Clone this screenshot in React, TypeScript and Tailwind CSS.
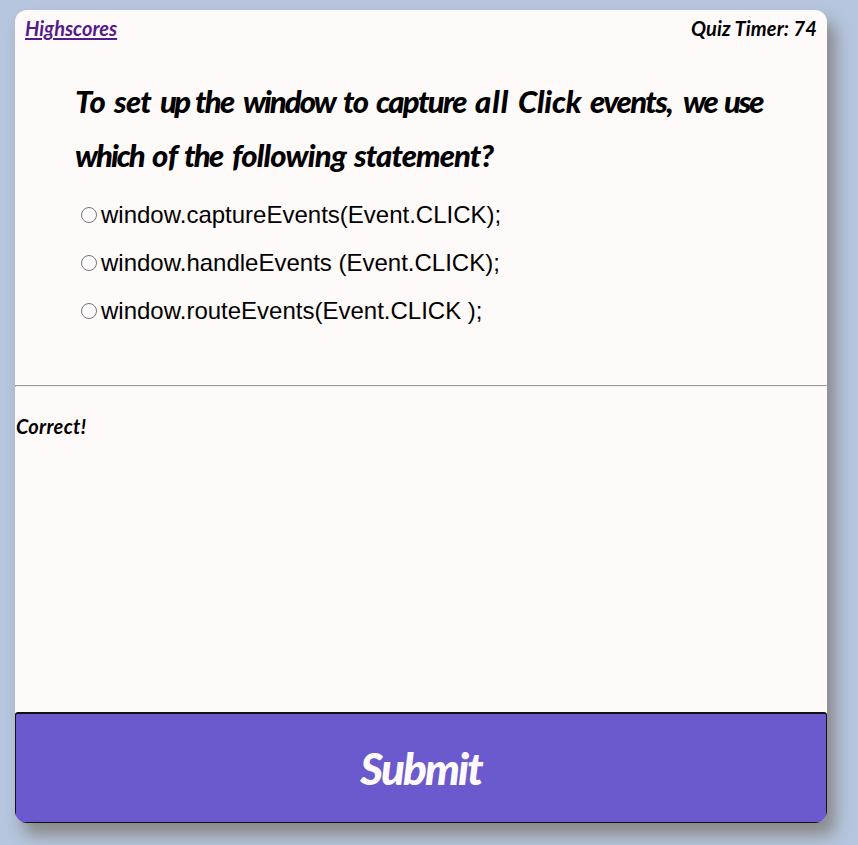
import React from "react";

const options = [
  "window.captureEvents(Event.CLICK);",
  "window.handleEvents (Event.CLICK);",
  "window.routeEvents(Event.CLICK );",
];

const script = "font-['Lato','Open_Sans',sans-serif] italic";

export default function App() {
  return (
    <div className="h-[845px] w-[858px] overflow-hidden bg-[#b5c5dd] pl-[15px] pt-[10px] text-black">
      <main className="flex h-[813px] w-[812px] flex-col overflow-hidden rounded-[12px] bg-[#fffafa] shadow-[8px_12px_16px_#888888]">
        <header className={`${script} flex h-[64px] shrink-0 justify-between px-[10px] pt-[5px] text-[20px] font-bold leading-[26px]`}>
          <a href="#" className="h-[26px] w-[92px] whitespace-nowrap text-[#551a8b] underline decoration-2 underline-offset-[2px]">Highscores</a>
          <span className="whitespace-nowrap tracking-[0.1px]">Quiz Timer: 74</span>
        </header>
        <h1 className={`${script} h-[108px] shrink-0 pl-[60px] text-[31px] font-black leading-[54px]`}>
          <span className="flex whitespace-nowrap">
            <span className="w-[39px] tracking-[0.5px]">To</span>
            <span className="w-[46px] tracking-[-0.7px]">set</span>
            <span className="w-[35px] tracking-[-2.6px]">up</span>
            <span className="w-[48px] tracking-[-1.7px]">the</span>
            <span className="w-[100px] tracking-[-2px]">window</span>
            <span className="w-[33px] tracking-[-1.4px]">to</span>
            <span className="w-[99px] tracking-[-1.6px]">capture</span>
            <span className="w-[43px] tracking-[1px]">all</span>
            <span className="w-[72px] tracking-[-0.2px]">Click</span>
            <span className="w-[93px] tracking-[-1.6px]">events,</span>
            <span className="w-[41px] tracking-[-2.4px]">we</span>
            <span className="tracking-[-2.2px]">use</span>
          </span>
          <span className="flex whitespace-nowrap">
            <span className="w-[77px] tracking-[-2px]">which</span>
            <span className="w-[32px]">of</span>
            <span className="w-[48px] tracking-[-1.7px]">the</span>
            <span className="w-[122px] tracking-[-0.8px]">following</span>
            <span className="tracking-[-0.9px]">statement?</span>
          </span>
        </h1>
        <form className="flex h-[203px] shrink-0 flex-col pl-[66px] pt-[9px] font-['Liberation_Sans',Arial,sans-serif] text-[24px] leading-[48px]">
          {options.map((option) => (
            <label key={option} className="flex h-[48px] items-center whitespace-pre">
              <input type="radio" name="answer" className="mr-[4px] h-[16px] w-[16px] appearance-none rounded-full border border-[#767676] bg-white" />
              {option}
            </label>
          ))}
        </form>
        <hr className="h-[2px] shrink-0 border border-b-[#f3efef] border-l-[#9a9a9a] border-r-[#eeeeee] border-t-[#9a9a9a]" />
        <p className={`${script} h-[325px] shrink-0 pl-px pt-[26px] text-[20px] font-bold leading-[26px] tracking-[0.3px]`}>Correct!</p>
        <button className={`${script} h-[111px] w-full shrink-0 rounded-[3px] border border-t-2 border-[#111111] bg-[#6a5acd] text-[44px] font-black leading-[54px] tracking-[-1.9px] text-[#fffafa]`}>
          Submit
        </button>
      </main>
    </div>
  );
}
